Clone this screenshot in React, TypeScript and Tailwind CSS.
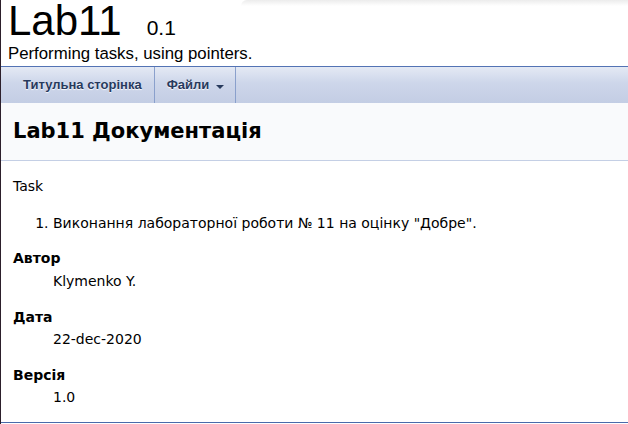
import React from "react";

const body = { fontFamily: '"DejaVu Sans", sans-serif' };
const navFont = { fontFamily: '"Liberation Sans", Arial, sans-serif' };

export default function App() {
  return (
    <div className="relative min-h-screen bg-white border-l border-[#2c1f2b] overflow-hidden text-black">
      <div className="absolute top-0 left-[240px] right-0 h-[6px] bg-gradient-to-b from-[#ececec] to-transparent rounded-tl-[40px]" />

      {/* Title area */}
      <div className="pl-[7px] pb-[2px] border-b border-[#5373B4]" style={navFont}>
        <div className="flex items-baseline h-[42px]">
          <span className="text-[42px] leading-[42px]">Lab11</span>
          <span className="text-[21px] leading-none ml-[25px]">0.1</span>
        </div>
        <div className="text-[16.8px] leading-[20px] mt-[2px]">Performing tasks, using pointers.</div>
      </div>

      {/* Navigation */}
      <div
        className="h-[36px] flex pl-[10px] bg-[linear-gradient(to_bottom,#e4e9f4,#cdd6ea_45%,#c3cde4)]"
        style={navFont}
      >
        <div className="px-[12px] border-r border-[#8aa0cc] text-[13px] font-bold leading-[36px] text-[#283A5D] [text-shadow:0_1px_1px_rgba(255,255,255,0.9)]">
          Титульна сторінка
        </div>
        <div className="pl-[12px] pr-[11px] border-r border-[#8aa0cc] text-[13px] font-bold leading-[36px] text-[#283A5D] [text-shadow:0_1px_1px_rgba(255,255,255,0.9)] flex items-center">
          Файли
          <span className="ml-[7px] mt-[3px] w-0 h-0 border-l-[4px] border-r-[4px] border-t-[4px] border-l-transparent border-r-transparent border-t-[#283A5D]" />
        </div>
      </div>

      {/* Header */}
      <div className="bg-[#F9FAFC] border-b border-[#C4CFE5] pl-[12px] pt-[14px] pb-[15px]" style={body}>
        <div className="text-[21px] leading-[28px] font-bold">Lab11 Документація</div>
      </div>

      {/* Contents */}
      <div className="pl-[12px] pr-[8px] text-[14px] leading-[22px]" style={body}>
        <p className="mt-[14px]">Task</p>
        <ol className="mt-[15px] pl-[40px] list-decimal">
          <li>Виконання лабораторної роботи № 11 на оцінку "Добре".</li>
        </ol>
        <dl className="mt-[13px]">
          <dt className="font-bold">Автор</dt>
          <dd className="ml-[40px] mt-[1px]">Klymenko Y.</dd>
        </dl>
        <dl className="mt-[14px]">
          <dt className="font-bold">Дата</dt>
          <dd className="ml-[40px]">22-dec-2020</dd>
        </dl>
        <dl className="mt-[14px]">
          <dt className="font-bold">Версія</dt>
          <dd className="ml-[40px]">1.0</dd>
        </dl>
      </div>

      <div className="mt-[14px] border-t border-[#4A6AAA] h-[20px]" />
    </div>
  );
}
